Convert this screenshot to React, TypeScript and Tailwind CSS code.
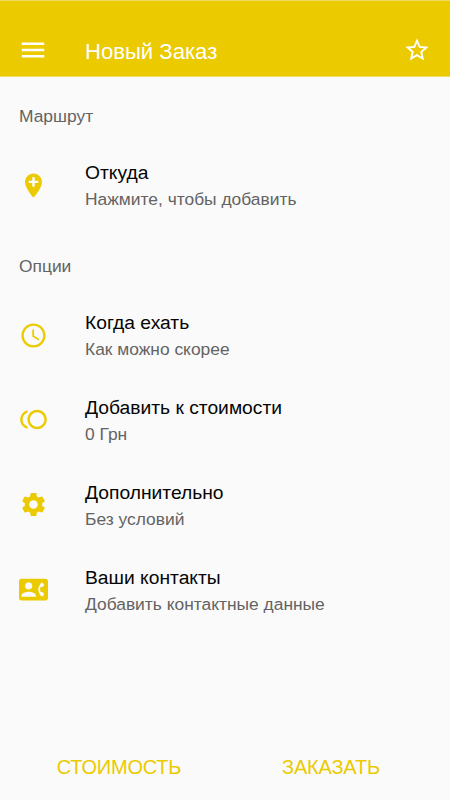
import type { ReactNode } from 'react';
import {
  MdAddLocation,
  MdContactPhone,
  MdMenu,
  MdSchedule,
  MdSettings,
  MdStarBorder,
  MdToll,
} from 'react-icons/md';

type RowProps = {
  icon: ReactNode;
  title: string;
  subtitle: string;
};

function Row({ icon, title, subtitle }: RowProps) {
  return (
    <li className="flex h-[84.85px] items-center">
      <div className="flex w-[66px] shrink-0 justify-center pb-[2.5px] text-[#ebca00]">{icon}</div>
      <div className="pl-[19px]">
        <p className="text-[19.25px] leading-[27px] text-[#050505]">{title}</p>
        <p className="text-[17.4px] leading-[27px] text-[#636363]">{subtitle}</p>
      </div>
    </li>
  );
}

export default function App() {
  return (
    <div className="flex h-[800px] w-[450px] flex-col bg-[#fafafa] font-['Liberation_Sans',Arial,sans-serif]">
      {/* Top bar */}
      <header className="flex h-[77px] items-end border-y border-[#efdb63] bg-[#ebca00] pb-[10px] text-white">
        <button className="flex w-[66px] justify-center pb-px" aria-label="Меню">
          <MdMenu size={30} />
        </button>
        <h1 className="flex-1 pl-[19px] text-[22.1px] leading-[28px]">Новый Заказ</h1>
        <button className="flex w-[67px] justify-center pb-[2px]" aria-label="Избранное">
          <MdStarBorder size={28} />
        </button>
      </header>

      <main className="flex-1">
        <h2 className="pt-[27px] pl-[19px] text-[17.4px] leading-6 text-[#636363]">Маршрут</h2>
        <ul className="pt-[16px]">
          <Row icon={<MdAddLocation size={29} />} title="Откуда" subtitle="Нажмите, чтобы добавить" />
        </ul>

        <h2 className="pt-[25px] pl-[19px] text-[17.4px] leading-6 text-[#636363]">Опции</h2>
        <ul className="pt-[16px]">
          <Row icon={<MdSchedule size={29} />} title="Когда ехать" subtitle="Как можно скорее" />
          <Row icon={<MdToll size={29} />} title="Добавить к стоимости" subtitle="0 Грн" />
          <Row icon={<MdSettings size={29} />} title="Дополнительно" subtitle="Без условий" />
          <Row icon={<MdContactPhone size={29} />} title="Ваши контакты" subtitle="Добавить контактные данные" />
        </ul>
      </main>

      {/* Bottom actions */}
      <footer className="flex h-[66px] text-[20px] tracking-[-0.2px] text-[#ebca00]">
        <button className="w-[238px]">СТОИМОСТЬ</button>
        <button className="w-[186px]">ЗАКАЗАТЬ</button>
      </footer>
    </div>
  );
}
